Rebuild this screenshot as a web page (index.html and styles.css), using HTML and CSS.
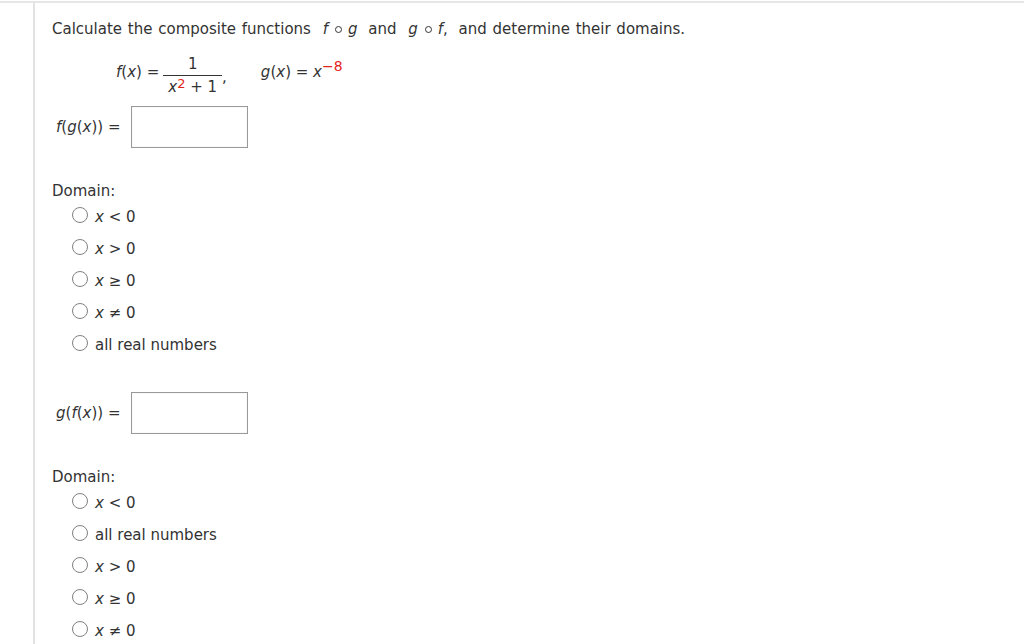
FILE: index.html
```html
<!DOCTYPE html>
<html lang="en">
<head>
    <meta charset="UTF-8">
    <title>Composite Functions</title>
    <link rel="stylesheet" href="styles.css">
</head>
<body>
    <div class="frame">
        <div class="gutter"></div>
        <div class="question">
            <p class="prompt">Calculate the composite functions <span class="math"><i>f</i><span class="comp"></span><i>g</i></span> and <span class="math"><i>g</i><span class="comp"></span><i>f</i>,</span> and determine their domains.</p>

            <div class="given">
                <span class="fn"><i>f</i>(<i>x</i>) = </span>
                <span class="frac">
                    <span class="num">1</span>
                    <span class="den"><i>x</i><sup class="red low">2</sup> + 1</span>
                </span>
                <span class="comma">,</span>
                <span class="fn gfn"><i>g</i>(<i>x</i>) = <i>x</i><sup class="red">&minus;8</sup></span>
            </div>

            <div class="answer">
                <span class="answer-label"><i>f</i>(<i>g</i>(<i>x</i>)) =</span>
                <span class="answer-box"></span>
            </div>

            <div class="domain">
                <div class="domain-title">Domain:</div>
                <label class="choice"><span class="radio"></span><span><i>x</i> &lt; 0</span></label>
                <label class="choice"><span class="radio"></span><span><i>x</i> &gt; 0</span></label>
                <label class="choice"><span class="radio"></span><span><i>x</i> &ge; 0</span></label>
                <label class="choice"><span class="radio"></span><span><i>x</i> &ne; 0</span></label>
                <label class="choice"><span class="radio"></span><span>all real numbers</span></label>
            </div>

            <div class="answer second">
                <span class="answer-label"><i>g</i>(<i>f</i>(<i>x</i>)) =</span>
                <span class="answer-box"></span>
            </div>

            <div class="domain second">
                <div class="domain-title">Domain:</div>
                <label class="choice"><span class="radio"></span><span><i>x</i> &lt; 0</span></label>
                <label class="choice"><span class="radio"></span><span>all real numbers</span></label>
                <label class="choice"><span class="radio"></span><span><i>x</i> &gt; 0</span></label>
                <label class="choice"><span class="radio"></span><span><i>x</i> &ge; 0</span></label>
                <label class="choice"><span class="radio"></span><span><i>x</i> &ne; 0</span></label>
            </div>
        </div>
    </div>
</body>
</html>
```

FILE: styles.css
```css
body {
    margin: 0;
    background-color: #fff;
    color: #333;
    font-family: "DejaVu Sans", Verdana, sans-serif;
    font-size: 15px;
}

.frame {
    display: flex;
    margin-top: 1px;
    border-top: 2px solid #e6e6e6;
    min-height: 641px;
}

.gutter {
    width: 33px;
    border-right: 2px solid #e2e2e2;
}

.question {
    padding: 15px 0 0 17px;
}

.prompt {
    margin: 0;
    line-height: 22px;
    word-spacing: 1px;
}

.math {
    margin: 0 5px 0 6px;
}

.comp {
    display: inline-block;
    width: 5px;
    height: 5px;
    border: 1.5px solid #333;
    border-radius: 50%;
    margin: 0 6px 1px 7px;
}

.given {
    display: flex;
    align-items: center;
    margin: 10px 0 0 64px;
    height: 44px;
}

.frac {
    display: inline-flex;
    flex-direction: column;
    align-items: center;
    margin-left: 6px;
    margin-top: 10px;
}

.num {
    border-bottom: 1px solid #333;
    padding: 0 2px 2px;
    width: 100%;
    text-align: center;
    line-height: 17px;
}

.den {
    line-height: 22px;
    padding: 0 3px;
}

.red {
    color: #e3241b;
    font-size: 14px;
    line-height: 0;
}

.red.low {
    font-size: 13px;
    vertical-align: 4px;
}

.comma {
    margin: 10px 0 0 2px;
}

.gfn {
    margin-left: 34px;
}

.answer {
    display: flex;
    align-items: center;
    margin-top: 12px;
    margin-left: 4px;
}

.answer.second {
    margin-top: 31px;
}

.answer-label {
    width: 75px;
}

.answer-box {
    width: 115px;
    height: 40px;
    border: 1px solid #999;
    box-shadow: inset 0 0 1px #ccc;
}

.domain {
    margin-top: 32px;
}

.domain.second {
    margin-top: 32px;
}

.domain-title {
    line-height: 22px;
    margin-bottom: -1px;
}

.choice {
    display: flex;
    align-items: center;
    height: 32px;
    margin-left: 20px;
}

.radio {
    width: 14px;
    height: 14px;
    border: 1px solid #808080;
    border-radius: 50%;
    margin-right: 7px;
    margin-top: -4px;
}
```
